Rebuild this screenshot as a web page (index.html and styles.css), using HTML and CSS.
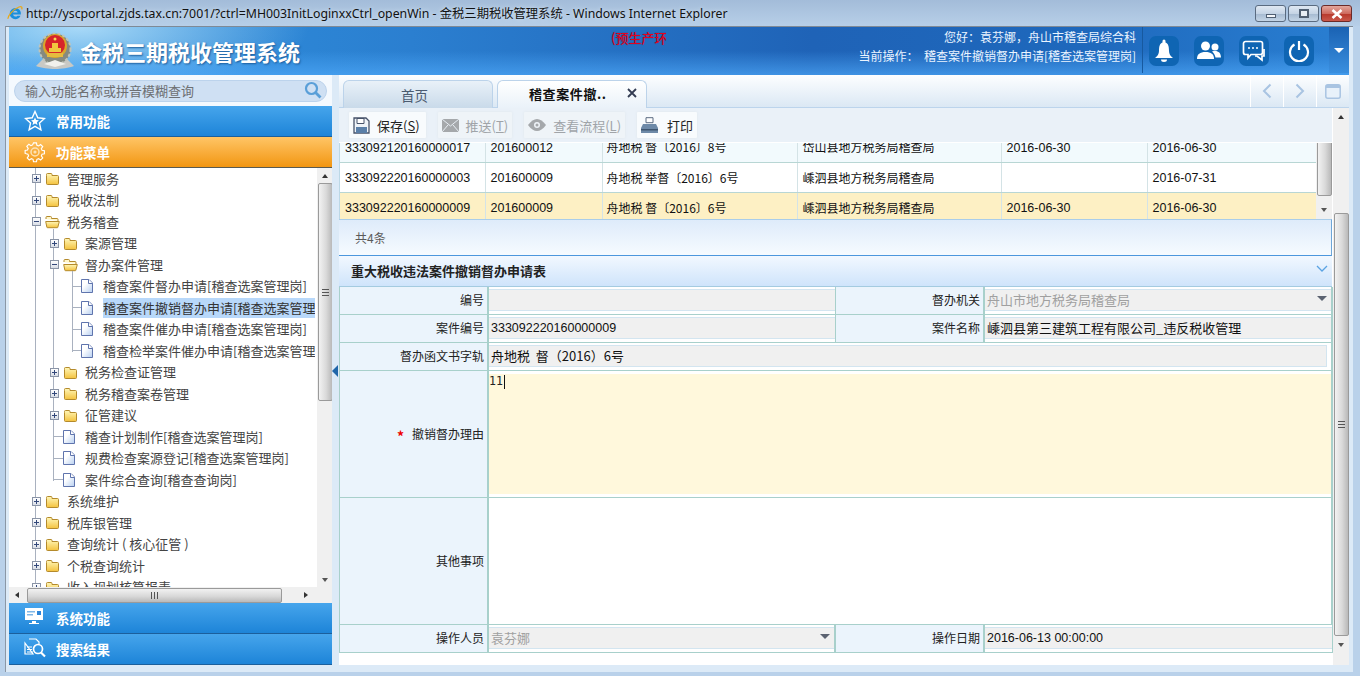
FILE: index.html
```html
<!DOCTYPE html>
<html lang="zh-CN">
<head>
<meta charset="utf-8">
<title>金税三期税收管理系统</title>
<link rel="stylesheet" href="styles.css">
</head>
<body>
<svg class="defs" width="0" height="0" aria-hidden="true">
  <defs>
    <linearGradient id="fg" x1="0" y1="0" x2="0" y2="1"><stop offset="0" stop-color="#fff7b8"/><stop offset="1" stop-color="#f4c23e"/></linearGradient>
    <linearGradient id="dg" x1="0" y1="0" x2="1" y2="1"><stop offset=".35" stop-color="#fff"/><stop offset="1" stop-color="#b7cff0"/></linearGradient>
    <symbol id="folder" viewBox="0 0 15 14"><path d="M1.500 3.500V2.500a1 1 0 0 1 1-1h3.500a1 1 0 0 1 1 1v1h5.500a1 1 0 0 1 1 1v7a1 1 0 0 1-1 1h-10a1 1 0 0 1-1-1z" fill="url(#fg)" stroke="#b48a2c"/></symbol>
    <symbol id="folder-open" viewBox="0 0 15 14"><path d="M1 4V2.500a1 1 0 0 1 1-1h3.500a1 1 0 0 1 1 1v1h5.500a1 1 0 0 1 1 1V6" fill="#fff6c9" stroke="#b48a2c"/><path d="M.7 6.500h13.600l-1.500 5.800a.6.6 0 0 1-.6.4H2.500a.6.6 0 0 1-.6-.4z" fill="url(#fg)" stroke="#b48a2c"/></symbol>
    <symbol id="doc" viewBox="0 0 12 14"><path d="M.5.500h7.500l3.500 3.500v9.500H.5z" fill="url(#dg)" stroke="#5f74ad"/><path d="M7.500.500v4h4" fill="#fff" stroke="#5f74ad"/></symbol>
  </defs>
</svg>
<div class="window">
  <div class="titlebar">
    <svg class="ie" width="16" height="16" viewBox="0 0 16 16"><path d="M8.300 3A5.600 5.600 0 0 0 2.700 8.600 5.600 5.600 0 0 0 8.300 14.200c2.400 0 4.400-1.400 5.200-3.500h-3A2.600 2.600 0 0 1 6 9.600h7.900A5.600 5.600 0 0 0 8.300 3zM6 7.600a2.400 2.400 0 0 1 4.700 0z" fill="#1b8fdc" fill-rule="evenodd"/><path d="M1.200 13.800C.3 12.200 5.300 4.400 12 2c2.400-.9 3.600.3 2.600 2.400" fill="none" stroke="#e9a91a" stroke-width="1.300"/></svg>
    <span class="title-text">http://yscportal.zjds.tax.cn:7001/?ctrl=MH003InitLoginxxCtrl_openWin - 金税三期税收管理系统 - Windows Internet Explorer</span>
    <div class="winbtns">
      <span class="winbtn"><i class="g-min"></i></span>
      <span class="winbtn"><i class="g-max"></i></span>
      <span class="winbtn close"><svg width="14" height="10" viewBox="0 0 14 10"><path d="M2.500 1l9 8M11.500 1l-9 8" stroke="#fff" stroke-width="2.600"/></svg></span>
    </div>
  </div>

  <div class="client">
    <div class="page">
      <header class="header">
        <svg class="emblem" width="40" height="40" viewBox="0 0 40 40">
          <path d="M20 38c-6 0-14-1-19-3l6-6h26l6 6c-5 2-13 3-19 3z" fill="#c9c9c4"/>
          <circle cx="20" cy="18" r="15.500" fill="#858a80"/>
          <circle cx="20" cy="18" r="15.500" fill="none" stroke="#c0c4b8" stroke-width="2" stroke-dasharray="3 2"/>
          <circle cx="20" cy="15" r="12" fill="#d9a72b"/>
          <circle cx="20" cy="14" r="10" fill="#d7242a"/>
          <path d="M12 22h16v4H12z" fill="#e5bb3e"/>
          <path d="M14 17h12v4H14zM17 12h6v5h-6z" fill="#f0c83f"/>
          <circle cx="20" cy="8" r="1.500" fill="#f7dc55"/>
          <path d="M9 33l11-4 11 4-11 3z" fill="#f1f1ec"/>
        </svg>
        <h1 class="brand">金税三期税收管理系统</h1>
        <span class="env">(预生产环境)</span>
        <div class="userinfo">
          <p>您好：袁芬娜，舟山市稽查局综合科</p>
          <p>当前操作：&nbsp; 稽查案件撤销督办申请[稽查选案管理岗]</p>
        </div>
        <div class="hbtns">
          <span class="hbtn"><svg width="22" height="26" viewBox="0 0 22 26"><path d="M11 1.500a1.500 1.500 0 0 1 1.500 1.500v1.500C15.500 5.500 16 9 16 13c0 3 1.500 5 4 7H2c2.500-2 4-4 4-7 0-4 .5-7.500 3.500-8.500V3A1.500 1.500 0 0 1 11 1.500z" fill="#fff"/><path d="M8 21.500h6a3 2.500 0 0 1-6 0z" fill="#fff"/></svg></span>
          <span class="hbtn"><svg width="24" height="20" viewBox="0 0 24 20"><circle cx="8.500" cy="5" r="4.500" fill="#fff"/><path d="M0 18c0-5 3-7 8.500-7s8.500 2 8.500 7z" fill="#fff"/><circle cx="18" cy="6" r="3.500" fill="#fff"/><path d="M15 10.500c5-1.500 9 .5 9 6h-5.500c-.5-2.500-1.500-4.500-3.500-6z" fill="#fff"/></svg></span>
          <span class="hbtn"><svg width="24" height="24" viewBox="0 0 24 24"><path d="M3.500 2.500h15a2 2 0 0 1 2 2v9a2 2 0 0 1-2 2H9l-3 3.500V15.500H3.500a2 2 0 0 1-2-2v-9a2 2 0 0 1 2-2z" fill="none" stroke="#fff" stroke-width="1.700"/><path d="M22 10v7h-2v4l-5-4h-2" fill="none" stroke="#fff" stroke-width="1.700"/><circle cx="7" cy="9" r="1" fill="#fff"/><circle cx="11" cy="9" r="1" fill="#fff"/><circle cx="15" cy="9" r="1" fill="#fff"/></svg></span>
          <span class="hbtn"><svg width="22" height="22" viewBox="0 0 22 22"><path d="M6.500 4.500a9 9 0 1 0 9 0" fill="none" stroke="#fff" stroke-width="2.200"/><path d="M11 1v9" stroke="#fff" stroke-width="2.200"/></svg></span>
        </div>
        <div class="hdrop"><i></i></div>
      </header>

      <div class="workspace">
        <aside class="sidebar">
          <div class="searchwrap">
            <div class="search">
              <span>输入功能名称或拼音模糊查询</span>
              <svg width="18" height="18" viewBox="0 0 18 18"><circle cx="7.500" cy="7.500" r="5.500" fill="none" stroke="#5a9fd8" stroke-width="2.200"/><path d="M11.500 11.500l5 5" stroke="#5a9fd8" stroke-width="2.800"/></svg>
            </div>
          </div>
          <div class="acc">
            <svg class="acc-ico" width="22" height="22" viewBox="0 0 22 22"><path d="M11 1.500l2.800 6.300 6.700.7-5 4.600 1.400 6.700L11 16.400l-5.900 3.400 1.400-6.700-5-4.600 6.700-.7z" fill="none" stroke="#fff" stroke-width="1.400"/><path d="M11 7.500l1.200 2.500 2.700.3-2 1.900.6 2.700-2.500-1.400-2.500 1.400.6-2.700-2-1.900 2.700-.3z" fill="#fff"/></svg>
            常用功能
          </div>
          <div class="acc active">
            <svg class="acc-ico" width="22" height="22" viewBox="0 0 22 22"><path d="M9.300 1h3.400l.5 2.700 1.900.8 2.300-1.600 2.400 2.400-1.600 2.300.8 1.900 2.700.5v3.400l-2.700.5-.8 1.900 1.600 2.300-2.400 2.400-2.300-1.600-1.900.8-.5 2.700H9.300l-.5-2.700-1.900-.8-2.300 1.600-2.400-2.400 1.600-2.300-.8-1.900L-.2 13V9.600l2.700-.5.800-1.900-1.600-2.300 2.400-2.400 2.300 1.600 1.900-.8z" transform="translate(1.300 1) scale(.88)" fill="none" stroke="#fff" stroke-width="1.300"/><circle cx="11" cy="11" r="4" fill="none" stroke="#fde2b4" stroke-width="1.500"/><circle cx="11" cy="11" r="1.600" fill="#fde2b4"/></svg>
            功能菜单
          </div>
          <div class="treebox">
            <div class="tree-view">
              <div class="tree">
                <div class="t-row"><b class="exp plus"></b><svg class="folder"><use href="#folder"/></svg><span>管理服务</span></div>
                <div class="t-row"><b class="exp plus"></b><svg class="folder"><use href="#folder"/></svg><span>税收法制</span></div>
                <div class="t-row"><b class="exp minus"></b><svg class="folder"><use href="#folder-open"/></svg><span>税务稽查</span></div>
                <div class="branch">
                  <div class="t-row"><b class="exp plus"></b><svg class="folder"><use href="#folder"/></svg><span>案源管理</span></div>
                  <div class="t-row"><b class="exp minus"></b><svg class="folder"><use href="#folder-open"/></svg><span>督办案件管理</span></div>
                  <div class="branch leafs">
                    <div class="t-row leaf"><svg class="doc"><use href="#doc"/></svg><span>稽查案件督办申请[稽查选案管理岗]</span></div>
                    <div class="t-row leaf"><svg class="doc"><use href="#doc"/></svg><span class="sel">稽查案件撤销督办申请[稽查选案管理岗]</span></div>
                    <div class="t-row leaf"><svg class="doc"><use href="#doc"/></svg><span>稽查案件催办申请[稽查选案管理岗]</span></div>
                    <div class="t-row leaf"><svg class="doc"><use href="#doc"/></svg><span>稽查检举案件催办申请[稽查选案管理岗]</span></div>
                  </div>
                  <div class="t-row"><b class="exp plus"></b><svg class="folder"><use href="#folder"/></svg><span>税务检查证管理</span></div>
                  <div class="t-row"><b class="exp plus"></b><svg class="folder"><use href="#folder"/></svg><span>税务稽查案卷管理</span></div>
                  <div class="t-row"><b class="exp plus"></b><svg class="folder"><use href="#folder"/></svg><span>征管建议</span></div>
                  <div class="t-row leaf"><svg class="doc"><use href="#doc"/></svg><span>稽查计划制作[稽查选案管理岗]</span></div>
                  <div class="t-row leaf"><svg class="doc"><use href="#doc"/></svg><span>规费检查案源登记[稽查选案管理岗]</span></div>
                  <div class="t-row leaf"><svg class="doc"><use href="#doc"/></svg><span>案件综合查询[稽查查询岗]</span></div>
                </div>
                <div class="t-row"><b class="exp plus"></b><svg class="folder"><use href="#folder"/></svg><span>系统维护</span></div>
                <div class="t-row"><b class="exp plus"></b><svg class="folder"><use href="#folder"/></svg><span>税库银管理</span></div>
                <div class="t-row"><b class="exp plus"></b><svg class="folder"><use href="#folder"/></svg><span>查询统计 ( 核心征管 )</span></div>
                <div class="t-row"><b class="exp plus"></b><svg class="folder"><use href="#folder"/></svg><span>个税查询统计</span></div>
                <div class="t-row"><b class="exp plus"></b><svg class="folder"><use href="#folder"/></svg><span>收入规划核算报表</span></div>
              </div>
              <div class="vbar">
                <i class="arr up"></i>
                <div class="thumb v side"><em></em></div>
                <i class="arr down"></i>
              </div>
            </div>
            <div class="hbar">
              <i class="arr left"></i>
              <div class="thumb h"><em></em></div>
              <i class="arr right"></i>
              <span class="corner"></span>
            </div>
          </div>
          <div class="acc">
            <svg class="acc-ico" width="20" height="18" viewBox="0 0 20 18"><path d="M1 1h18v12H1z" fill="#fff"/><path d="M3 4h8v1.500H3zM3 7h6v1.500H3z" fill="#7fb7e8"/><path d="M13 4h4v4h-4z" fill="#2f86d8"/><path d="M8 14h4v2h3v1H5v-1h3z" fill="#fff"/></svg>
            系统功能
          </div>
          <div class="acc">
            <svg class="acc-ico" width="22" height="20" viewBox="0 0 22 20"><path d="M5 1h7l3 3v2M9 16H1V5z" fill="none" stroke="#fff" stroke-width="1.200"/><path d="M3 9h5M3 11.500h5M3 14h6" stroke="#fff" stroke-width="1.200"/><circle cx="14" cy="11" r="4.500" fill="none" stroke="#fff" stroke-width="1.700"/><path d="M17 14.500l4 4" stroke="#fff" stroke-width="2.200"/></svg>
            搜索结果
          </div>
        </aside>

        <div class="splitter"><i></i></div>

        <main class="main">
          <div class="tabbar">
            <div class="tab">首页</div>
            <div class="tab current"><span>稽查案件撤..</span><svg width="10" height="10" viewBox="0 0 10 10"><path d="M1 1l8 8M9 1l-8 8" stroke="#333c52" stroke-width="1.800"/></svg></div>
            <div class="tabnav">
              <span><svg width="10" height="16" viewBox="0 0 10 16"><path d="M8.500 1.500L2 8l6.500 6.500" fill="none" stroke="#a9c4e2" stroke-width="2"/></svg></span>
              <span><svg width="10" height="16" viewBox="0 0 10 16"><path d="M1.500 1.500L8 8l-6.500 6.500" fill="none" stroke="#a9c4e2" stroke-width="2"/></svg></span>
              <span><svg width="16" height="15" viewBox="0 0 16 15"><rect x=".8" y=".8" width="14.400" height="13.400" rx="2" fill="#e8f1fa" stroke="#a9c4e2" stroke-width="1.500"/><path d="M1 1h14v3H1z" fill="#a9c4e2"/></svg></span>
            </div>
          </div>
          <div class="content">
            <div class="content-col">
              <div class="toolbar">
                <div class="tbtn"><svg width="17" height="17" viewBox="0 0 17 17"><path d="M1 1h12l3 3v12H1z" fill="#eef3f8" stroke="#47536a" stroke-width="1.300"/><path d="M4 1.500h7v5H4z" fill="#fff" stroke="#47536a"/><path d="M3 10h11v6H3z" fill="#5a7fa8"/></svg><span>保存(<u>S</u>)</span></div>
                <div class="tbtn off"><svg width="17" height="13" viewBox="0 0 17 13"><path d="M0 0h17v13H0z" fill="#a5a8ab"/><path d="M0 0l8.500 7L17 0M0 13l6-7M17 13l-6-7" fill="none" stroke="#e7edf3"/></svg><span>推送(<u>T</u>)</span></div>
                <div class="tbtn off"><svg width="18" height="12" viewBox="0 0 18 12"><path d="M0 6c3-4 6-6 9-6s6 2 9 6c-3 4-6 6-9 6S3 10 0 6z" fill="#a5a8ab"/><circle cx="9" cy="6" r="3" fill="#eef3f8"/><circle cx="9" cy="6" r="1.500" fill="#a5a8ab"/></svg><span>查看流程(<u>L</u>)</span></div>
                <div class="tbtn"><svg width="17" height="17" viewBox="0 0 17 17"><path d="M5 .7h7v5H5z" fill="#fff" stroke="#5b6a80"/><path d="M2 7h13l2 4v5H0v-5z" fill="#6e8aa8"/><path d="M0 12h17v1.500H0z" fill="#3f5670"/></svg><span>打印</span></div>
              </div>
              <div class="grid">
                <table class="gridtable">
                  <colgroup><col class="c1"><col class="c2"><col class="c3"><col class="c4"><col class="c5"><col class="c6"></colgroup>
                  <tr class="r-a"><td class="num">333092120160000017</td><td class="num">201600012</td><td>舟地税 督〔2016〕8号</td><td>岱山县地方税务局稽查局</td><td class="num">2016-06-30</td><td class="num">2016-06-30</td></tr>
                  <tr class="r-b"><td class="num">333092220160000003</td><td class="num">201600009</td><td>舟地税 举督〔2016〕6号</td><td>嵊泗县地方税务局稽查局</td><td></td><td class="num">2016-07-31</td></tr>
                  <tr class="r-s"><td class="num">333092220160000009</td><td class="num">201600009</td><td>舟地税 督〔2016〕6号</td><td>嵊泗县地方税务局稽查局</td><td class="num">2016-06-30</td><td class="num">2016-06-30</td></tr>
                </table>
                <div class="vbar grid-bar">
                  <div class="thumb v small"></div>
                  <i class="arr down"></i>
                </div>
              </div>
              <div class="gridfoot">共4条</div>
              <div class="panelhead"><strong>重大税收违法案件撤销督办申请表</strong><svg width="12" height="7" viewBox="0 0 12 7"><path d="M1 1l5 5 5-5" fill="none" stroke="#5aa3e3" stroke-width="1.300"/></svg></div>
              <div class="form">
                <div class="lab">编号</div>
                <div class="val"><div class="inp"></div></div>
                <div class="lab">督办机关</div>
                <div class="val"><div class="inp sel-inp dim"><span>舟山市地方税务局稽查局</span><i class="caret"></i></div></div>

                <div class="lab">案件编号</div>
                <div class="val"><div class="inp num2">333092220160000009</div></div>
                <div class="lab">案件名称</div>
                <div class="val"><div class="inp"><span>嵊泗县第三建筑工程有限公司_违反税收管理</span></div></div>

                <div class="lab">督办函文书字轨</div>
                <div class="val span3"><div class="inp wide"><span>舟地税&nbsp; 督（2016）6号</span></div></div>

                <div class="lab"><em>*</em>撤销督办理由</div>
                <div class="val span3 tall"><div class="area"><span class="mono">11</span><i class="cursor"></i></div></div>

                <div class="lab">其他事项</div>
                <div class="val span3 tall"></div>

                <div class="lab">操作人员</div>
                <div class="val"><div class="inp sel-inp dim"><span>袁芬娜</span><i class="caret"></i></div></div>
                <div class="lab">操作日期</div>
                <div class="val"><div class="inp num2">2016-06-13 00:00:00</div></div>
              </div>
              <div class="whitefill"></div>
            </div>
            <div class="vbar mainbar">
              <i class="arr up"></i>
              <div class="mainbar-track"><div class="thumb v mainthumb"><em></em></div></div>
              <i class="arr down"></i>
            </div>
          </div>
        </main>
      </div>
    </div>
  </div>
</div>
</body>
</html>
```

FILE: styles.css
```css
* { box-sizing: border-box; }
html, body { margin: 0; padding: 0; height: 100%; overflow: hidden; }
body { font-family: "Noto Sans CJK SC", "Liberation Sans", sans-serif; font-size: 13px; color: #333; }
p, h1 { margin: 0; }
.defs { position: absolute; }

.window { width: 1360px; height: 676px; display: flex; flex-direction: column; background: #b9d1ea; }

.titlebar { height: 26px; flex: none; display: flex; align-items: center; padding-left: 7px; background: linear-gradient(#a3bcd9, #b7cfe8); position: relative; }
.ie { margin-right: 3px; }
.title-text { font-family: "Noto Sans", "Noto Sans CJK SC", sans-serif; font-size: 12.300px; color: #111; white-space: nowrap; text-shadow: 0 0 4px #dbe8f5; }
.winbtns { margin-left: auto; margin-right: 8px; display: flex; gap: 2px; align-self: flex-start; margin-top: 5px; }
.winbtn { width: 31px; height: 17px; border: 1px solid #5a6b80; border-radius: 3px; background: linear-gradient(#dfe8f2 0, #c5d4e5 50%, #a7bbd2 55%, #c4d5e6 100%); display: flex; align-items: center; justify-content: center; }
.winbtn.close { border-color: #6b2a28; background: linear-gradient(#e3a79d 0, #ce6b5f 50%, #b83a2d 55%, #c9584b 100%); }
.g-min { width: 10px; height: 4px; margin-top: 4px; background: #f3f6fa; border: 1px solid #505f72; }
.g-max { width: 10px; height: 9px; border: 2px solid #505f72; background: #e8eef5; }

.client { flex: 1; margin: 0 7px 4px 5px; min-height: 0; background: #dceaf7; border-top: 1px solid #7f8a96; border-left: 1px solid #8a97a6; padding: 0 4px 7px 3px; }
.page { height: 100%; display: flex; flex-direction: column; background: #fff; }

.header { height: 48px; flex: none; display: flex; align-items: center; color: #fff; background: radial-gradient(ellipse 230px 70px at 70px 0, rgba(190,230,252,.85), rgba(120,195,240,0) 100%), linear-gradient(to right, #2f94e0 0, #2b7fd0 30%, #1f63b7 60%, #1e68bc 80%, #2a7fd2 100%); position: relative; overflow: hidden; }
.header::after { content: ""; position: absolute; left: 0; right: 0; bottom: 0; height: 24px; background: linear-gradient(rgba(70,160,240,0), rgba(80,170,250,.65)); }
.header > * { position: relative; z-index: 1; }
.emblem { margin-left: 26px; flex: none; }
.brand { margin-left: 5px; font-size: 22px; font-weight: 700; line-height: 30px; white-space: nowrap; color: #fff; text-shadow: 1px 1px 2px #1a5c9c; width: 220px; }
.env { margin-left: 311px; margin-top: -27px; width: 55px; overflow: hidden; white-space: nowrap; color: #e6001e; font-size: 13px; line-height: 18px; flex: none; text-shadow: 0 0 1px #5b1030; }
.userinfo { margin-left: auto; padding-right: 6px; width: 290px; height: 46px; margin-top: -2px; font-size: 12px; line-height: 19px; text-align: right; border-right: 1px solid #17599f; color: #eaf4ff; white-space: nowrap; }
.hbtns { display: flex; gap: 15px; margin-left: 6px; }
.hbtn { width: 30px; height: 30px; border-radius: 7px; background: #0f65b3; display: flex; align-items: center; justify-content: center; }
.hdrop { width: 20px; height: 46px; margin-left: 15px; align-self: flex-start; background: linear-gradient(#1a62b3, #3a8fdf); display: flex; align-items: center; justify-content: center; }
.hdrop i { width: 0; height: 0; border: 5px solid transparent; border-top: 5px solid #fff; border-bottom: 0; }

.workspace { flex: 1; min-height: 0; display: flex; }

.sidebar { width: 323px; flex: none; display: flex; flex-direction: column; background: #fff; }
.searchwrap { height: 31px; flex: none; padding: 5px 5px 0 5px; background: #f4f9fe; }
.search { height: 22px; border-radius: 11px; background: #cfe0f3; border: 1px solid #bcd3ec; display: flex; align-items: center; justify-content: space-between; padding: 0 4px 0 10px; color: #6d6f72; font-size: 13px; }
.search span { margin-top: -2px; }
.search svg { flex: none; margin-top: -2px; }
.acc { height: 31px; flex: none; display: flex; align-items: center; padding-left: 47px; position: relative; color: #fff; font-weight: 700; font-size: 13.500px; background: linear-gradient(#46a5ec, #1d84d8); border-bottom: 1px solid #1b5f9c; }
.acc.active { background: linear-gradient(#ffc566, #f29612); border-bottom-color: #5a5a50; }
.acc-ico { position: absolute; left: 15px; top: 4px; }

.treebox { height: 435px; flex: none; display: flex; flex-direction: column; overflow: hidden; }
.tree-view { height: 419px; display: flex; overflow: hidden; }
.tree { width: 306px; flex: none; overflow: hidden; font-size: 13px; color: #444; position: relative; padding-left: 23px; margin-right: 2px; }
.tree::before { content: ""; position: absolute; left: 26px; top: 0; bottom: 0; width: 1px; background: #a9b1bf; }
.t-row { height: 21.500px; display: flex; align-items: center; position: relative; white-space: nowrap; }
.t-row span { line-height: 20px; flex: none; }
.exp { width: 9px; height: 9px; flex: none; background: linear-gradient(#fff, #d8dde6); border: 1px solid #8a94a6; position: relative; margin-right: 4px; z-index: 1; }
.exp::before { content: ""; position: absolute; left: 1px; top: 3px; width: 5px; height: 1px; background: #33487a; }
.exp.plus::after { content: ""; position: absolute; left: 3px; top: 1px; width: 1px; height: 5px; background: #33487a; }
.folder { width: 15px; height: 14px; flex: none; margin: 1px 7px 0 0; }
.branch { margin-left: 18px; position: relative; }
.branch::before { content: ""; position: absolute; left: 3px; top: -4px; bottom: 10px; width: 1px; background: #a9b1bf; }
.t-row.leaf::before { content: ""; position: absolute; left: 3px; top: 10px; width: 10px; height: 1px; background: #a9b1bf; }
.doc { width: 12px; height: 14px; flex: none; margin: 0 10px 0 13px; position: relative; z-index: 1; }
.sel { background: #b8d8fa; color: #333; }
.leafs::before { left: 4px; top: -5px; bottom: 10px; }
.leafs .t-row.leaf::before { left: 4px; width: 9px; }

.vbar { width: 16px; flex: none; background: #f0f0f0; display: flex; flex-direction: column; align-items: center; position: relative; }
.hbar { height: 16px; flex: none; background: #f0f0f0; display: flex; align-items: center; position: relative; }
.arr { width: 0; height: 0; flex: none; border: 3px solid transparent; }
.arr.up { border-bottom: 4px solid #333; border-top: 0; margin: 6px 0 5px; }
.arr.down { border-top: 4px solid #555; border-bottom: 0; margin: auto 0 5px; }
.arr.left { border-right: 4px solid #333; border-left: 0; margin: 0 8px 0 6px; }
.arr.right { border-left: 4px solid #333; border-right: 0; margin-left: 22px; }
.thumb { border: 1px solid #9a9a9a; border-radius: 2px; display: flex; align-items: center; justify-content: center; }
.thumb.v { width: 15px; background: linear-gradient(to right, #f2f2f2, #d9d9d9 55%, #b9b9b9); }
.thumb.h { height: 15px; width: 255px; background: linear-gradient(#f2f2f2, #d9d9d9 55%, #b9b9b9); }
.thumb.side { height: 218px; }
.thumb em { display: block; }
.thumb.v em { width: 7px; height: 7px; background: repeating-linear-gradient(#555 0 1px, transparent 1px 3px); }
.thumb.h em { width: 7px; height: 7px; background: repeating-linear-gradient(to right, #555 0 1px, transparent 1px 3px); }
.corner { width: 16px; height: 16px; margin-left: auto; background: #f0f0f0; }

.splitter { width: 7px; flex: none; background: #dceaf7; position: relative; }
.splitter i { position: absolute; left: 0; top: 290px; width: 0; height: 0; border: 6px solid transparent; border-right: 6px solid #1f66a9; border-left: 0; }

.main { width: 1010px; flex: none; display: flex; flex-direction: column; background: #fff; }
.tabbar { height: 33px; flex: none; display: flex; align-items: flex-end; padding-left: 4px; gap: 4px; background: linear-gradient(#fdfeff, #dbe8f4); border-bottom: 1px solid #bcd4ec; position: relative; }
.tab { width: 150px; height: 28px; margin-bottom: -1px; border: 1px solid #bcd3ea; border-bottom: 0; border-radius: 6px 6px 0 0; background: linear-gradient(#e9f1f8, #c9daea); color: #4b5b70; font-size: 13.500px; display: flex; align-items: center; justify-content: center; padding: 0 7px 0 0; }
.tab.current { background: linear-gradient(#fff, #eaf2f9); color: #111; font-weight: 700; font-size: 13px; letter-spacing: .6px; justify-content: flex-start; padding: 0 0 2px 31px; z-index: 2; }
.tab.current svg { margin-left: 20px; margin-top: -2px; flex: none; }
.tabnav { margin-left: auto; height: 32px; display: flex; align-self: flex-start; }
.tabnav span { width: 33px; border-left: 1px solid #fff; display: flex; align-items: center; justify-content: center; }

.content { flex: 1; min-height: 0; display: flex; position: relative; }
.content-col { width: 994px; flex: none; display: flex; flex-direction: column; position: relative; }
.toolbar { position: absolute; left: 0; top: 0; width: 993px; height: 35px; z-index: 3; background: #eaf1f8; border-bottom: 1px solid #fff; display: flex; padding-top: 4px; gap: 12px; padding-left: 10px; }
.tbtn { height: 26px; display: flex; align-items: center; gap: 7px; padding: 0 4px; background: #f8fbfd; box-shadow: 0 0 3px #dfe6ec; border-radius: 1px; color: #222; font-size: 13px; white-space: nowrap; }
.tbtn:first-child { padding-right: 6px; }
.tbtn:last-child { gap: 9px; }
.tbtn.off { color: #a0a4a8; background: #eff4f8; }

.grid { height: 111px; flex: none; padding-top: 24px; display: flex; overflow: hidden; border-left: 1px solid #bcd8e6; width: 993px; }
.gridtable { width: 976px; height: 90px; border-collapse: collapse; table-layout: fixed; flex: none; font-size: 12px; color: #111; }
.c1 { width: 145px; } .c2 { width: 117px; } .c3 { width: 195px; } .c4 { width: 204px; } .c5 { width: 146px; } .c6 { width: 169px; }
.gridtable td { height: 30px; padding: 0 0 0 5px; border-right: 1px solid #d4e3e6; border-bottom: 1px solid #b8d6d4; white-space: nowrap; overflow: hidden; }
.gridtable td.num { font-family: "Liberation Sans", sans-serif; font-size: 12.500px; padding-top: 2px; }
.gridtable td:nth-child(3) { padding-left: 4px; }
.gridtable td:last-child { border-right: 0; }
.r-a td { background: #f2fafd; }
.r-b td { background: #fff; }
.r-s td { background: #fdf0c4; }
.grid-bar { height: 90px; width: 16px; }
.thumb.small { height: 64px; width: 15px; }
.grid-bar .arr.down { margin: auto 0 10px; }

.gridfoot { height: 37px; flex: none; width: 993px; padding-left: 16px; display: flex; align-items: center; color: #5a5a5a; font-size: 12px; background: linear-gradient(#deebfa, #f6fbff); border-top: 1px solid #a9cdea; border-right: 1px solid #6ea6d8; border-bottom: 1px solid #4c97dd; }
.panelhead { height: 31px; flex: none; width: 993px; padding: 0 4px 0 12px; display: flex; align-items: center; justify-content: space-between; background: linear-gradient(#f2f8ff, #cfe4fb); border-bottom: 1px solid #a4cbe0; color: #222; font-size: 13px; }
.panelhead strong { font-weight: 700; margin-top: -1px; }
.panelhead svg { margin-top: -6px; }

.form { width: 993px; flex: none; display: grid; grid-template-columns: 149px 347px 149px 348px; grid-template-rows: 28px 28px 28px 127px 127px 28px; border-left: 1px solid #a8d0cb; background: #fff; }
.lab { background: #ebf4fc; border-right: 2px solid #a8d0cb; border-bottom: 1px solid #a8d0cb; display: flex; align-items: center; justify-content: flex-end; padding: 0 3px 2px 0; color: #222; font-size: 12px; white-space: nowrap; }
.lab em { color: #e00; font-style: normal; font-weight: 700; margin-right: 8px; font-size: 14px; line-height: 10px; transform: translateY(3px); }
.val { border-right: 1px solid #a8d0cb; border-bottom: 1px solid #a8d0cb; padding-top: 2px; background: #fff; min-width: 0; }
.span3 { grid-column: span 3; }
.form > .val:nth-child(4n), .form > .val.span3 { border-right: 2px solid #a8d0cb; }
.val.tall { padding-top: 3px; }
.inp { height: 22px; background: #f0f0f0; border-top: 1px solid #d3e5f0; border-bottom: 1px solid #d3e5f0; padding: 0 0 2px 2px; display: flex; align-items: center; color: #111; font-size: 13px; position: relative; white-space: nowrap; overflow: hidden; }
.inp.num2 { font-family: "Liberation Sans", sans-serif; font-size: 12.500px; padding-bottom: 0; }
.inp.wide { margin-right: 4px; border: 1px solid #d3e5f0; border-left: 0; }
.inp.dim { color: #a0a0a0; }
.caret { position: absolute; right: 4px; top: 6px; width: 0; height: 0; border: 5px solid transparent; border-top: 5px solid #5b6270; border-bottom: 0; }
.area { height: 120px; background: #fff8dc; color: #222; font-size: 12px; display: flex; align-items: flex-start; }
.mono { font-family: "DejaVu Sans Mono", monospace; font-size: 11.500px; line-height: 15px; }
.cursor { width: 1px; height: 14px; margin-top: 1px; margin-left: 1px; background: #111; }
.whitefill { flex: 1; background: #fff; }

.mainbar { width: 16px; background: #f0f0f0; }
.mainbar .arr.up { margin: 7px 0 0; }
.mainbar-track { flex: 1; display: flex; align-items: flex-end; width: 100%; padding-bottom: 7px; justify-content: center; }
.thumb.mainthumb { height: 423px; }
.mainbar .arr.down { margin: 0 0 18px; }
```
